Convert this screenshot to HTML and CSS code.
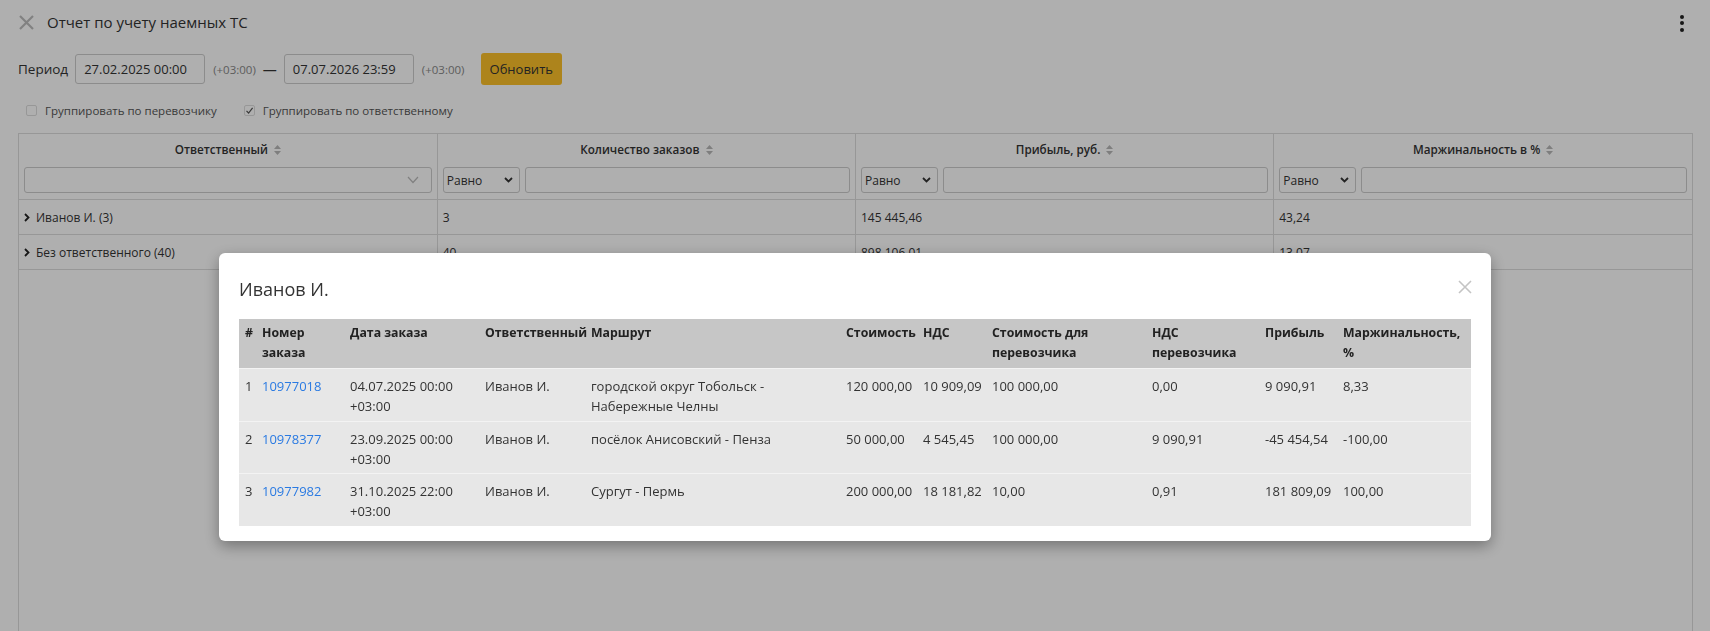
FILE: index.html
```html
<!DOCTYPE html>
<html lang="ru">

<head>
    <meta charset="UTF-8">
    <meta name="viewport" content="width=device-width, initial-scale=1.0">
    <title>Отчет по учету наемных ТС</title>
    <link rel="stylesheet" href="styles.css">
</head>

<body>
    <div class="page">
        <div class="topbar">
            <svg class="close-icon" width="17" height="17" viewBox="0 0 17 17">
                <path d="M2 2 L15 15 M15 2 L2 15" stroke="#bdbdbd" stroke-width="2.2" fill="none" />
            </svg>
            <span class="page-title">Отчет по учету наемных ТС</span>
            <span class="kebab"><i></i><i></i><i></i></span>
        </div>

        <div class="period">
            <span class="period-label">Период</span>
            <div class="date-input">27.02.2025 00:00</div>
            <span class="tz">(+03:00)</span>
            <span class="dash">—</span>
            <div class="date-input">07.07.2026 23:59</div>
            <span class="tz">(+03:00)</span>
            <button class="btn-refresh">Обновить</button>
        </div>

        <div class="checks">
            <label class="check"><span class="box"></span>Группировать по перевозчику</label>
            <label class="check"><span class="box checked">
                    <svg width="9" height="9" viewBox="0 0 9 9">
                        <path d="M1.5 4.8 L3.6 7 L7.6 1.8" stroke="#555" stroke-width="1.2" fill="none" />
                    </svg></span>Группировать по ответственному</label>
        </div>

        <div class="grid">
            <table class="grid-table">
                <thead>
                    <tr>
                        <th>
                            <div class="th-title">Ответственный <svg class="sort" width="7" height="10" viewBox="0 0 7 10"><path d="M3.5 0 L7 4 L0 4Z M3.5 10 L7 6 L0 6Z" fill="#b8b8b8" /></svg></div>
                            <div class="filter">
                                <div class="combo">
                                    <svg width="12" height="8" viewBox="0 0 12 8"><path d="M1 1 L6 6.5 L11 1" stroke="#bbb" stroke-width="1.2" fill="none" /></svg>
                                </div>
                            </div>
                        </th>
                        <th>
                            <div class="th-title">Количество заказов <svg class="sort" width="7" height="10" viewBox="0 0 7 10"><path d="M3.5 0 L7 4 L0 4Z M3.5 10 L7 6 L0 6Z" fill="#b8b8b8" /></svg></div>
                            <div class="filter">
                                <div class="op">Равно <svg width="9" height="6" viewBox="0 0 9 6"><path d="M1 1 L4.5 4.5 L8 1" stroke="#333" stroke-width="1.8" fill="none" /></svg></div>
                                <div class="text-field"></div>
                            </div>
                        </th>
                        <th>
                            <div class="th-title">Прибыль, руб. <svg class="sort" width="7" height="10" viewBox="0 0 7 10"><path d="M3.5 0 L7 4 L0 4Z M3.5 10 L7 6 L0 6Z" fill="#b8b8b8" /></svg></div>
                            <div class="filter">
                                <div class="op">Равно <svg width="9" height="6" viewBox="0 0 9 6"><path d="M1 1 L4.5 4.5 L8 1" stroke="#333" stroke-width="1.8" fill="none" /></svg></div>
                                <div class="text-field"></div>
                            </div>
                        </th>
                        <th>
                            <div class="th-title">Маржинальность в % <svg class="sort" width="7" height="10" viewBox="0 0 7 10"><path d="M3.5 0 L7 4 L0 4Z M3.5 10 L7 6 L0 6Z" fill="#b8b8b8" /></svg></div>
                            <div class="filter">
                                <div class="op">Равно <svg width="9" height="6" viewBox="0 0 9 6"><path d="M1 1 L4.5 4.5 L8 1" stroke="#333" stroke-width="1.8" fill="none" /></svg></div>
                                <div class="text-field"></div>
                            </div>
                        </th>
                    </tr>
                </thead>
                <tbody>
                    <tr>
                        <td><svg class="caret" width="6" height="9" viewBox="0 0 6 9"><path d="M1 1 L4.5 4.5 L1 8" stroke="#222" stroke-width="1.8" fill="none" /></svg>Иванов И. (3)</td>
                        <td>3</td>
                        <td>145 445,46</td>
                        <td>43,24</td>
                    </tr>
                    <tr>
                        <td><svg class="caret" width="6" height="9" viewBox="0 0 6 9"><path d="M1 1 L4.5 4.5 L1 8" stroke="#222" stroke-width="1.8" fill="none" /></svg>Без ответственного (40)</td>
                        <td>40</td>
                        <td>898 106,01</td>
                        <td>13,07</td>
                    </tr>
                </tbody>
            </table>
        </div>
    </div>

    <!-- details popup -->
    <div class="overlay">
        <div class="modal">
            <svg class="modal-close" width="14" height="14" viewBox="0 0 14 14">
                <path d="M1 1 L13 13 M13 1 L1 13" stroke="#c4c4c4" stroke-width="1.6" fill="none" />
            </svg>
            <h2 class="modal-title">Иванов И.</h2>
            <table class="orders">
                <colgroup>
                    <col style="width:17px">
                    <col style="width:88px">
                    <col style="width:135px">
                    <col style="width:106px">
                    <col style="width:255px">
                    <col style="width:77px">
                    <col style="width:69px">
                    <col style="width:160px">
                    <col style="width:113px">
                    <col style="width:78px">
                    <col style="width:134px">
                </colgroup>
                <thead>
                    <tr>
                        <th>#</th>
                        <th>Номер заказа</th>
                        <th>Дата заказа</th>
                        <th>Ответственный</th>
                        <th>Маршрут</th>
                        <th>Стоимость</th>
                        <th>НДС</th>
                        <th>Стоимость для перевозчика</th>
                        <th>НДС перевозчика</th>
                        <th>Прибыль</th>
                        <th>Маржинальность, %</th>
                    </tr>
                </thead>
                <tbody>
                    <tr>
                        <td>1</td>
                        <td><a href="#">10977018</a></td>
                        <td>04.07.2025 00:00 +03:00</td>
                        <td>Иванов И.</td>
                        <td>городской округ Тобольск - Набережные Челны</td>
                        <td>120 000,00</td>
                        <td>10 909,09</td>
                        <td>100 000,00</td>
                        <td>0,00</td>
                        <td>9 090,91</td>
                        <td>8,33</td>
                    </tr>
                    <tr>
                        <td>2</td>
                        <td><a href="#">10978377</a></td>
                        <td>23.09.2025 00:00 +03:00</td>
                        <td>Иванов И.</td>
                        <td>посёлок Анисовский - Пенза</td>
                        <td>50 000,00</td>
                        <td>4 545,45</td>
                        <td>100 000,00</td>
                        <td>9 090,91</td>
                        <td>-45 454,54</td>
                        <td>-100,00</td>
                    </tr>
                    <tr>
                        <td>3</td>
                        <td><a href="#">10977982</a></td>
                        <td>31.10.2025 22:00 +03:00</td>
                        <td>Иванов И.</td>
                        <td>Сургут - Пермь</td>
                        <td>200 000,00</td>
                        <td>18 181,82</td>
                        <td>10,00</td>
                        <td>0,91</td>
                        <td>181 809,09</td>
                        <td>100,00</td>
                    </tr>
                </tbody>
            </table>
        </div>
    </div>
</body>

</html>
```

FILE: styles.css
```css
body {
    margin: 0;
    font-family: "Open Sans", "Noto Sans", sans-serif;
    color: #333;
    background-color: #fff;
    overflow: hidden;
}

.page {
    padding: 0 17px 0 18px;
}

/* top bar */
.topbar {
    display: flex;
    align-items: center;
    height: 44px;
}

.page-title {
    margin-left: 12px;
    font-size: 15px;
    color: #333;
}

.kebab {
    margin-left: auto;
    margin-right: 9px;
    margin-top: 2px;
    display: flex;
    flex-direction: column;
    gap: 2.5px;
}

.kebab i {
    display: block;
    width: 4px;
    height: 4px;
    border-radius: 50%;
    background-color: #222;
}

/* period */
.period {
    display: flex;
    align-items: center;
    margin-top: 9px;
    height: 32px;
}

.period-label {
    font-size: 13.5px;
    margin-right: 7px;
}

.date-input {
    height: 28px;
    line-height: 28px;
    padding: 0 10px 0 8px;
    border: 1px solid #ccc;
    border-radius: 3px;
    font-size: 13px;
    width: 110px;
}

.tz {
    font-size: 11.5px;
    color: #888;
    margin-left: 8px;
}

.dash {
    margin: 0 7px;
    font-size: 14px;
}

.btn-refresh {
    margin-left: 16px;
    height: 32px;
    padding: 0 9px;
    border: none;
    border-radius: 3px;
    background-color: #fdc12a;
    color: #333;
    font-family: inherit;
    font-size: 13px;
}

/* checkboxes */
.checks {
    display: flex;
    align-items: center;
    gap: 27px;
    margin-top: 15px;
    padding-left: 8px;
    height: 20px;
}

.check {
    display: flex;
    align-items: center;
    font-size: 11.5px;
    color: #555;
}

.box {
    width: 11px;
    height: 11px;
    border: 1px solid #ddd;
    border-radius: 2px;
    margin-right: 8px;
    box-sizing: border-box;
    display: flex;
    align-items: center;
    justify-content: center;
}

/* main grid */
.grid {
    margin-top: 13px;
    border: 1px solid #ddd;
    height: 600px;
}

.grid-table {
    width: 100%;
    border-collapse: collapse;
    table-layout: fixed;
    font-size: 12px;
}

.grid-table th {
    padding: 2px 5px 6px;
    border-right: 1px solid #ddd;
    border-bottom: 1px solid #ddd;
    font-size: 11.7px;
    font-weight: 600;
    color: #333;
}

.grid-table th:last-child,
.grid-table td:last-child {
    border-right: none;
}

.th-title {
    height: 26px;
    line-height: 26px;
    text-align: center;
}

.sort {
    margin-left: 3px;
    vertical-align: -1px;
}

.filter {
    display: flex;
    gap: 5px;
    margin-top: 5px;
}

.combo,
.op,
.text-field {
    height: 26px;
    border: 1px solid #ccc;
    border-radius: 3px;
    box-sizing: border-box;
    background-color: #fff;
}

.combo {
    flex: 1;
    display: flex;
    align-items: center;
    justify-content: flex-end;
    padding-right: 12px;
}

.op {
    width: 77px;
    display: flex;
    align-items: center;
    justify-content: space-between;
    padding: 0 6px 0 3px;
    font-weight: normal;
    font-size: 12px;
}

.text-field {
    flex: 1;
}

.grid-table td {
    height: 34px;
    padding: 0 5px;
    border-right: 1px solid #ddd;
    border-bottom: 1px solid #ddd;
    color: #333;
}

.caret {
    margin: 0 6px 0 0;
    vertical-align: 0;
}

/* overlay + modal */
.overlay {
    position: fixed;
    inset: 0;
    background-color: rgba(0, 0, 0, 0.314);
    padding-top: 253px;
}

.modal {
    position: relative;
    width: 1232px;
    margin: 0 auto;
    padding: 24px 20px 15px;
    background-color: #fff;
    border-radius: 6px;
    box-shadow: 0 5px 15px rgba(0, 0, 0, 0.35);
}

.modal-close {
    position: absolute;
    top: 27px;
    right: 19px;
}

.modal-title {
    margin: 0 0 17px;
    font-size: 18px;
    font-weight: normal;
    line-height: 25px;
    color: #333;
}

.orders {
    width: 100%;
    border-collapse: collapse;
    table-layout: fixed;
    font-size: 13px;
    line-height: 20px;
}

.orders th {
    background-color: #c6c6c6;
    text-align: left;
    vertical-align: top;
    padding: 4px 2px 5px 6px;
    font-size: 12.3px;
    font-weight: bold;
    color: #222;
}

.orders td {
    background-color: #e7e7e7;
    vertical-align: top;
    padding: 7px 2px 4.5px 6px;
    border-top: 1px solid #f3f3f3;
    color: #333;
}

.orders a {
    color: #2a7ae2;
    text-decoration: none;
}
```
